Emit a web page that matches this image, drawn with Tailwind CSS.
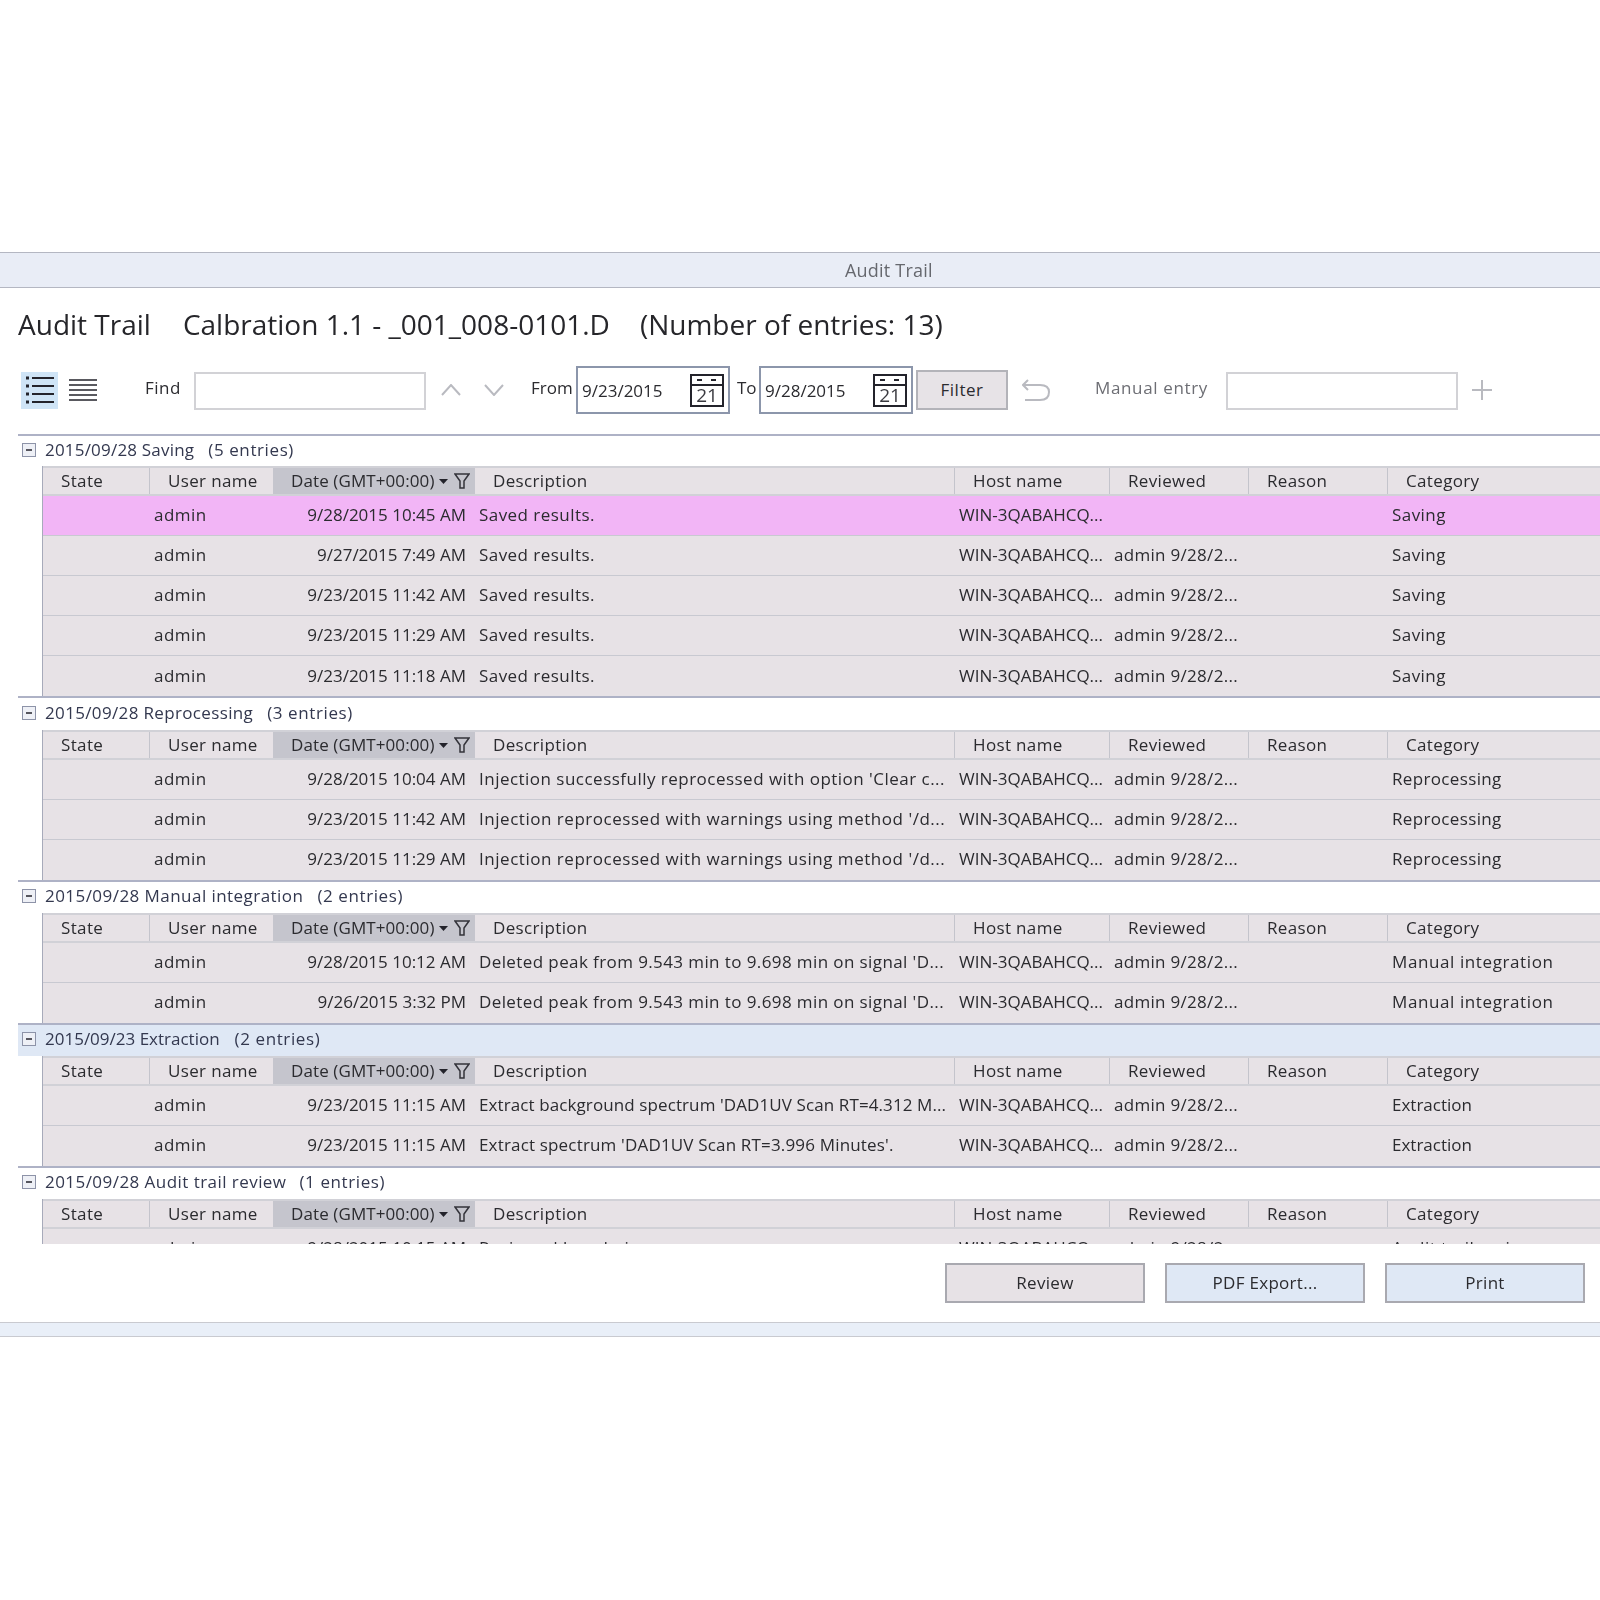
<!DOCTYPE html>
<html lang="en">
<head>
    <meta charset="UTF-8">
    <title>Audit Trail</title>
    <script src="https://cdn.jsdelivr.net/npm/@tailwindcss/browser@4"></script>
</head>
<body class="bg-white font-['Open_Sans',sans-serif] text-[#2b2b2f]">
<div class="w-[1600px] h-[1600px] overflow-hidden pt-[252px] blur-[0.4px]">

    <!-- window title -->
    <div class="h-9 bg-[#e9edf6] border-y border-y-[#b4b7c2] pl-[845px] flex items-center text-[18px] tracking-[0.2px] text-[#66686e]">Audit Trail</div>

    <!-- heading -->
    <div class="h-[78px] pl-[18px] pt-[15px] text-[28px] leading-[42px] text-[#26262a]">
        <span>Audit Trail</span><span class="ml-8">Calbration 1.1 - _001_008-0101.D</span><span class="ml-[30px]">(Number of entries: 13)</span>
    </div>

    <!-- toolbar -->
    <div class="h-12 flex items-center text-[17px]">
        <div class="ml-[21px] w-[37px] h-[37px] bg-[#cfe4f6] flex items-center justify-center">
            <svg width="28" height="30" viewBox="0 0 28 30" fill="none" stroke="#23232b" stroke-width="2"><path d="M6 3H28M6 11H28M6 19H28M6 27H28"/><path d="M0 3h3M0 11h3M0 19h3M0 27h3" stroke-width="3"/></svg>
        </div>
        <svg class="ml-[11px]" width="28" height="24" viewBox="0 0 28 24" fill="none" stroke="#23232b" stroke-width="1.6"><path d="M0 2H28M0 7H28M0 12H28M0 17H28M0 22H28"/></svg>
        <span class="ml-[48px] w-[49px] -mt-1 tracking-[0.5px]">Find</span>
        <div class="w-[232px] h-[38px] mt-px border-2 border-[#d2d2d6]"></div>
        <svg class="ml-[15px]" width="20" height="12" viewBox="0 0 20 12" fill="none" stroke="#b9bac0" stroke-width="2"><path d="M1 11L10 1L19 11"/></svg>
        <svg class="ml-[23px]" width="20" height="12" viewBox="0 0 20 12" fill="none" stroke="#b9bac0" stroke-width="2"><path d="M1 1L10 11L19 1"/></svg>
        <span class="ml-[27px] w-[45px] -mt-1">From</span>
        <div class="w-[154px] h-12 border-2 border-[#8c96ab] flex items-center justify-between pl-1 pr-1">
            <span class="pt-px">9/23/2015</span>
            <svg class="overflow-visible" width="34" height="33" viewBox="0 0 34 33" fill="none" stroke="#23232b" stroke-width="2"><rect x="1" y="1" width="32" height="31"/><path d="M1 11H33M7 6h5M21 6h5"/><text x="17" y="28" font-size="19" text-anchor="middle" fill="#3a3a40" stroke="none" font-family="Open Sans">21</text></svg>
        </div>
        <span class="ml-[7px] w-[22px] -mt-1">To</span>
        <div class="w-[154px] h-12 border-2 border-[#8c96ab] flex items-center justify-between pl-1 pr-1">
            <span class="pt-px">9/28/2015</span>
            <svg class="overflow-visible" width="34" height="33" viewBox="0 0 34 33" fill="none" stroke="#23232b" stroke-width="2"><rect x="1" y="1" width="32" height="31"/><path d="M1 11H33M7 6h5M21 6h5"/><text x="17" y="28" font-size="19" text-anchor="middle" fill="#3a3a40" stroke="none" font-family="Open Sans">21</text></svg>
        </div>
        <button class="ml-[3px] w-[92px] h-10 bg-[#e7e3e7] border-2 border-[#b3b3b9] tracking-[0.5px]">Filter</button>
        <svg class="ml-[14px]" width="28" height="22" viewBox="0 0 28 22" fill="none" stroke="#b9bac0" stroke-width="2"><path d="M6 1L1 6L6 11M1 6H18C25 6 27 9 27 13C27 18 24 21 18 21H3"/></svg>
        <span class="ml-[45px] w-[131px] -mt-1 text-[#6d6e74] tracking-[0.65px]">Manual entry</span>
        <div class="w-[232px] h-[38px] mt-px border-2 border-[#d2d2d6]"></div>
        <svg class="ml-[14px]" width="20" height="20" viewBox="0 0 20 20" fill="none" stroke="#b9bac0" stroke-width="2"><path d="M10 0V20M0 10H20"/></svg>
    </div>

    <div class="ml-[18px] mt-5 border-t-2 border-t-[#aeb2c6]"></div>

    <!-- grouped entries -->
    <div class="h-[808px] overflow-hidden ml-[18px] text-[17px]">

        <section class="border-b-2 border-b-[#aeb2c6]">
            <div class="h-[30px] pb-[3px] flex items-center gap-[9px] pl-1 text-[#33384f]">
                <svg width="14" height="14" viewBox="0 0 14 14" fill="none"><rect x="0.5" y="0.5" width="13" height="13" fill="#eef0f6" stroke="#8d93a8"/><path d="M4 7H10" stroke="#23232b" stroke-width="1.5"/></svg>
                <span class="tracking-[0.2px]">2015/09/28 Saving</span><span class="tracking-[0.6px] ml-[5px]">(5 entries)</span>
            </div>
            <div class="ml-6 border-l border-l-[#a7aaba]">
                <div class="h-[30px] grid grid-cols-[107px_123px_202px_480px_155px_139px_139px_213px] items-center bg-[#e7e2e6] border-y-2 border-[#d1d1d7] tracking-[0.35px]">
                    <span class="pl-[18px] h-full leading-[26px] border-r border-r-[#c4c4cc]">State</span><span class="pl-[18px] h-full leading-[26px]">User name</span>
                    <span class="pl-[18px] h-full leading-[26px] bg-[#c5c5cd] flex items-center tracking-[0.1px]">Date (GMT+00:00)<svg class="ml-1" width="9" height="5" viewBox="0 0 9 5" fill="#23232b"><path d="M0 0H9L4.500 5Z"/></svg><svg class="ml-[6px]" width="16" height="16" viewBox="0 0 16 16" fill="none" stroke="#33333a" stroke-width="1.500"><path d="M1 1H15L10 8V15H6V8Z"/></svg></span>
                    <span class="pl-[18px] h-full leading-[26px] border-r border-r-[#c4c4cc]">Description</span><span class="pl-[18px] h-full leading-[26px] border-r border-r-[#c4c4cc]">Host name</span><span class="pl-[18px] h-full leading-[26px] border-r border-r-[#c4c4cc]">Reviewed</span><span class="pl-[18px] h-full leading-[26px] border-r border-r-[#c4c4cc]">Reason</span><span class="pl-[18px] h-full leading-[26px]">Category</span>
                </div>
                <div class="h-10 pb-0.5 grid grid-cols-[107px_123px_202px_480px_155px_139px_139px_213px] items-center bg-[#f2b5f6] border-b border-b-[#c8c9d1] tracking-[0.45px]"><span></span><span class="pl-1">admin</span><span class="pr-[9px] text-right tracking-normal">9/28/2015 10:45 AM</span><span class="pl-1">Saved results.</span><span class="pl-1 tracking-normal">WIN-3QABAHCQ...</span><span></span><span></span><span class="pl-1">Saving</span></div>
                <div class="h-10 pb-0.5 grid grid-cols-[107px_123px_202px_480px_155px_139px_139px_213px] items-center bg-[#e7e2e6] border-b border-b-[#c8c9d1] tracking-[0.45px]"><span></span><span class="pl-1">admin</span><span class="pr-[9px] text-right tracking-normal">9/27/2015 7:49 AM</span><span class="pl-1">Saved results.</span><span class="pl-1 tracking-normal">WIN-3QABAHCQ...</span><span class="pl-1 tracking-[0.3px]">admin 9/28/2...</span><span></span><span class="pl-1">Saving</span></div>
                <div class="h-10 pb-0.5 grid grid-cols-[107px_123px_202px_480px_155px_139px_139px_213px] items-center bg-[#e7e2e6] border-b border-b-[#c8c9d1] tracking-[0.45px]"><span></span><span class="pl-1">admin</span><span class="pr-[9px] text-right tracking-normal">9/23/2015 11:42 AM</span><span class="pl-1">Saved results.</span><span class="pl-1 tracking-normal">WIN-3QABAHCQ...</span><span class="pl-1 tracking-[0.3px]">admin 9/28/2...</span><span></span><span class="pl-1">Saving</span></div>
                <div class="h-10 pb-0.5 grid grid-cols-[107px_123px_202px_480px_155px_139px_139px_213px] items-center bg-[#e7e2e6] border-b border-b-[#c8c9d1] tracking-[0.45px]"><span></span><span class="pl-1">admin</span><span class="pr-[9px] text-right tracking-normal">9/23/2015 11:29 AM</span><span class="pl-1">Saved results.</span><span class="pl-1 tracking-normal">WIN-3QABAHCQ...</span><span class="pl-1 tracking-[0.3px]">admin 9/28/2...</span><span></span><span class="pl-1">Saving</span></div>
                <div class="h-10 grid grid-cols-[107px_123px_202px_480px_155px_139px_139px_213px] items-center bg-[#e7e2e6] tracking-[0.45px]"><span></span><span class="pl-1">admin</span><span class="pr-[9px] text-right tracking-normal">9/23/2015 11:18 AM</span><span class="pl-1">Saved results.</span><span class="pl-1 tracking-normal">WIN-3QABAHCQ...</span><span class="pl-1 tracking-[0.3px]">admin 9/28/2...</span><span></span><span class="pl-1">Saving</span></div>
            </div>
        </section>

        <section class="border-b-2 border-b-[#aeb2c6]">
            <div class="h-[32px] pb-[3px] flex items-center gap-[9px] pl-1 text-[#33384f]">
                <svg width="14" height="14" viewBox="0 0 14 14" fill="none"><rect x="0.5" y="0.5" width="13" height="13" fill="#eef0f6" stroke="#8d93a8"/><path d="M4 7H10" stroke="#23232b" stroke-width="1.5"/></svg>
                <span class="tracking-[0.35px]">2015/09/28 Reprocessing</span><span class="tracking-[0.6px] ml-[5px]">(3 entries)</span>
            </div>
            <div class="ml-6 border-l border-l-[#a7aaba]">
                <div class="h-[30px] grid grid-cols-[107px_123px_202px_480px_155px_139px_139px_213px] items-center bg-[#e7e2e6] border-y-2 border-[#d1d1d7] tracking-[0.35px]">
                    <span class="pl-[18px] h-full leading-[26px] border-r border-r-[#c4c4cc]">State</span><span class="pl-[18px] h-full leading-[26px]">User name</span>
                    <span class="pl-[18px] h-full leading-[26px] bg-[#c5c5cd] flex items-center tracking-[0.1px]">Date (GMT+00:00)<svg class="ml-1" width="9" height="5" viewBox="0 0 9 5" fill="#23232b"><path d="M0 0H9L4.500 5Z"/></svg><svg class="ml-[6px]" width="16" height="16" viewBox="0 0 16 16" fill="none" stroke="#33333a" stroke-width="1.500"><path d="M1 1H15L10 8V15H6V8Z"/></svg></span>
                    <span class="pl-[18px] h-full leading-[26px] border-r border-r-[#c4c4cc]">Description</span><span class="pl-[18px] h-full leading-[26px] border-r border-r-[#c4c4cc]">Host name</span><span class="pl-[18px] h-full leading-[26px] border-r border-r-[#c4c4cc]">Reviewed</span><span class="pl-[18px] h-full leading-[26px] border-r border-r-[#c4c4cc]">Reason</span><span class="pl-[18px] h-full leading-[26px]">Category</span>
                </div>
                <div class="h-10 pb-0.5 grid grid-cols-[107px_123px_202px_480px_155px_139px_139px_213px] items-center bg-[#e7e2e6] border-b border-b-[#c8c9d1] tracking-[0.45px]"><span></span><span class="pl-1">admin</span><span class="pr-[9px] text-right tracking-normal">9/28/2015 10:04 AM</span><span class="pl-1 tracking-[0.48px]">Injection successfully reprocessed with option 'Clear c...</span><span class="pl-1 tracking-normal">WIN-3QABAHCQ...</span><span class="pl-1 tracking-[0.3px]">admin 9/28/2...</span><span></span><span class="pl-1 tracking-[0.35px]">Reprocessing</span></div>
                <div class="h-10 pb-0.5 grid grid-cols-[107px_123px_202px_480px_155px_139px_139px_213px] items-center bg-[#e7e2e6] border-b border-b-[#c8c9d1] tracking-[0.45px]"><span></span><span class="pl-1">admin</span><span class="pr-[9px] text-right tracking-normal">9/23/2015 11:42 AM</span><span class="pl-1 tracking-[0.53px]">Injection reprocessed with warnings using method '/d...</span><span class="pl-1 tracking-normal">WIN-3QABAHCQ...</span><span class="pl-1 tracking-[0.3px]">admin 9/28/2...</span><span></span><span class="pl-1 tracking-[0.35px]">Reprocessing</span></div>
                <div class="h-10 pb-0.5 grid grid-cols-[107px_123px_202px_480px_155px_139px_139px_213px] items-center bg-[#e7e2e6] tracking-[0.45px]"><span></span><span class="pl-1">admin</span><span class="pr-[9px] text-right tracking-normal">9/23/2015 11:29 AM</span><span class="pl-1 tracking-[0.53px]">Injection reprocessed with warnings using method '/d...</span><span class="pl-1 tracking-normal">WIN-3QABAHCQ...</span><span class="pl-1 tracking-[0.3px]">admin 9/28/2...</span><span></span><span class="pl-1 tracking-[0.35px]">Reprocessing</span></div>
            </div>
        </section>

        <section class="border-b-2 border-b-[#aeb2c6]">
            <div class="h-[31px] pb-[3px] flex items-center gap-[9px] pl-1 text-[#33384f]">
                <svg width="14" height="14" viewBox="0 0 14 14" fill="none"><rect x="0.5" y="0.5" width="13" height="13" fill="#eef0f6" stroke="#8d93a8"/><path d="M4 7H10" stroke="#23232b" stroke-width="1.5"/></svg>
                <span class="tracking-[0.45px]">2015/09/28 Manual integration</span><span class="tracking-[0.6px] ml-[5px]">(2 entries)</span>
            </div>
            <div class="ml-6 border-l border-l-[#a7aaba]">
                <div class="h-[30px] grid grid-cols-[107px_123px_202px_480px_155px_139px_139px_213px] items-center bg-[#e7e2e6] border-y-2 border-[#d1d1d7] tracking-[0.35px]">
                    <span class="pl-[18px] h-full leading-[26px] border-r border-r-[#c4c4cc]">State</span><span class="pl-[18px] h-full leading-[26px]">User name</span>
                    <span class="pl-[18px] h-full leading-[26px] bg-[#c5c5cd] flex items-center tracking-[0.1px]">Date (GMT+00:00)<svg class="ml-1" width="9" height="5" viewBox="0 0 9 5" fill="#23232b"><path d="M0 0H9L4.500 5Z"/></svg><svg class="ml-[6px]" width="16" height="16" viewBox="0 0 16 16" fill="none" stroke="#33333a" stroke-width="1.500"><path d="M1 1H15L10 8V15H6V8Z"/></svg></span>
                    <span class="pl-[18px] h-full leading-[26px] border-r border-r-[#c4c4cc]">Description</span><span class="pl-[18px] h-full leading-[26px] border-r border-r-[#c4c4cc]">Host name</span><span class="pl-[18px] h-full leading-[26px] border-r border-r-[#c4c4cc]">Reviewed</span><span class="pl-[18px] h-full leading-[26px] border-r border-r-[#c4c4cc]">Reason</span><span class="pl-[18px] h-full leading-[26px]">Category</span>
                </div>
                <div class="h-10 pb-0.5 grid grid-cols-[107px_123px_202px_480px_155px_139px_139px_213px] items-center bg-[#e7e2e6] border-b border-b-[#c8c9d1] tracking-[0.45px]"><span></span><span class="pl-1">admin</span><span class="pr-[9px] text-right tracking-normal">9/28/2015 10:12 AM</span><span class="pl-1 tracking-[0.4px]">Deleted peak from 9.543 min to 9.698 min on signal 'D...</span><span class="pl-1 tracking-normal">WIN-3QABAHCQ...</span><span class="pl-1 tracking-[0.3px]">admin 9/28/2...</span><span></span><span class="pl-1 tracking-[0.6px]">Manual integration</span></div>
                <div class="h-10 pb-0.5 grid grid-cols-[107px_123px_202px_480px_155px_139px_139px_213px] items-center bg-[#e7e2e6] tracking-[0.45px]"><span></span><span class="pl-1">admin</span><span class="pr-[9px] text-right tracking-normal">9/26/2015 3:32 PM</span><span class="pl-1 tracking-[0.4px]">Deleted peak from 9.543 min to 9.698 min on signal 'D...</span><span class="pl-1 tracking-normal">WIN-3QABAHCQ...</span><span class="pl-1 tracking-[0.3px]">admin 9/28/2...</span><span></span><span class="pl-1 tracking-[0.6px]">Manual integration</span></div>
            </div>
        </section>

        <section class="border-b-2 border-b-[#aeb2c6]">
            <div class="h-[31px] pb-[3px] flex items-center gap-[9px] pl-1 bg-[#dfe8f5] text-[#33384f]">
                <svg width="14" height="14" viewBox="0 0 14 14" fill="none"><rect x="0.5" y="0.5" width="13" height="13" fill="#eef0f6" stroke="#8d93a8"/><path d="M4 7H10" stroke="#23232b" stroke-width="1.5"/></svg>
                <span>2015/09/23 Extraction</span><span class="tracking-[0.6px] ml-1.5">(2 entries)</span>
            </div>
            <div class="ml-6 border-l border-l-[#a7aaba]">
                <div class="h-[30px] grid grid-cols-[107px_123px_202px_480px_155px_139px_139px_213px] items-center bg-[#e7e2e6] border-y-2 border-[#d1d1d7] tracking-[0.35px]">
                    <span class="pl-[18px] h-full leading-[26px] border-r border-r-[#c4c4cc]">State</span><span class="pl-[18px] h-full leading-[26px]">User name</span>
                    <span class="pl-[18px] h-full leading-[26px] bg-[#c5c5cd] flex items-center tracking-[0.1px]">Date (GMT+00:00)<svg class="ml-1" width="9" height="5" viewBox="0 0 9 5" fill="#23232b"><path d="M0 0H9L4.500 5Z"/></svg><svg class="ml-[6px]" width="16" height="16" viewBox="0 0 16 16" fill="none" stroke="#33333a" stroke-width="1.500"><path d="M1 1H15L10 8V15H6V8Z"/></svg></span>
                    <span class="pl-[18px] h-full leading-[26px] border-r border-r-[#c4c4cc]">Description</span><span class="pl-[18px] h-full leading-[26px] border-r border-r-[#c4c4cc]">Host name</span><span class="pl-[18px] h-full leading-[26px] border-r border-r-[#c4c4cc]">Reviewed</span><span class="pl-[18px] h-full leading-[26px] border-r border-r-[#c4c4cc]">Reason</span><span class="pl-[18px] h-full leading-[26px]">Category</span>
                </div>
                <div class="h-10 pb-0.5 grid grid-cols-[107px_123px_202px_480px_155px_139px_139px_213px] items-center bg-[#e7e2e6] border-b border-b-[#c8c9d1] tracking-[0.45px]"><span></span><span class="pl-1">admin</span><span class="pr-[9px] text-right tracking-normal">9/23/2015 11:15 AM</span><span class="pl-1 tracking-[0.1px]">Extract background spectrum 'DAD1UV Scan RT=4.312 M...</span><span class="pl-1 tracking-normal">WIN-3QABAHCQ...</span><span class="pl-1 tracking-[0.3px]">admin 9/28/2...</span><span></span><span class="pl-1 tracking-normal">Extraction</span></div>
                <div class="h-10 pb-0.5 grid grid-cols-[107px_123px_202px_480px_155px_139px_139px_213px] items-center bg-[#e7e2e6] tracking-[0.45px]"><span></span><span class="pl-1">admin</span><span class="pr-[9px] text-right tracking-normal">9/23/2015 11:15 AM</span><span class="pl-1 tracking-[0.17px]">Extract spectrum 'DAD1UV Scan RT=3.996 Minutes'.</span><span class="pl-1 tracking-normal">WIN-3QABAHCQ...</span><span class="pl-1 tracking-[0.3px]">admin 9/28/2...</span><span></span><span class="pl-1 tracking-normal">Extraction</span></div>
            </div>
        </section>

        <section>
            <div class="h-[31px] pb-[3px] flex items-center gap-[9px] pl-1 text-[#33384f]">
                <svg width="14" height="14" viewBox="0 0 14 14" fill="none"><rect x="0.5" y="0.5" width="13" height="13" fill="#eef0f6" stroke="#8d93a8"/><path d="M4 7H10" stroke="#23232b" stroke-width="1.5"/></svg>
                <span class="tracking-[0.45px]">2015/09/28 Audit trail review</span><span class="tracking-[0.6px] ml-1">(1 entries)</span>
            </div>
            <div class="ml-6 border-l border-l-[#a7aaba]">
                <div class="h-[30px] grid grid-cols-[107px_123px_202px_480px_155px_139px_139px_213px] items-center bg-[#e7e2e6] border-y-2 border-[#d1d1d7] tracking-[0.35px]">
                    <span class="pl-[18px] h-full leading-[26px] border-r border-r-[#c4c4cc]">State</span><span class="pl-[18px] h-full leading-[26px]">User name</span>
                    <span class="pl-[18px] h-full leading-[26px] bg-[#c5c5cd] flex items-center tracking-[0.1px]">Date (GMT+00:00)<svg class="ml-1" width="9" height="5" viewBox="0 0 9 5" fill="#23232b"><path d="M0 0H9L4.500 5Z"/></svg><svg class="ml-[6px]" width="16" height="16" viewBox="0 0 16 16" fill="none" stroke="#33333a" stroke-width="1.500"><path d="M1 1H15L10 8V15H6V8Z"/></svg></span>
                    <span class="pl-[18px] h-full leading-[26px] border-r border-r-[#c4c4cc]">Description</span><span class="pl-[18px] h-full leading-[26px] border-r border-r-[#c4c4cc]">Host name</span><span class="pl-[18px] h-full leading-[26px] border-r border-r-[#c4c4cc]">Reviewed</span><span class="pl-[18px] h-full leading-[26px] border-r border-r-[#c4c4cc]">Reason</span><span class="pl-[18px] h-full leading-[26px]">Category</span>
                </div>
                <div class="h-10 pb-0.5 grid grid-cols-[107px_123px_202px_480px_155px_139px_139px_213px] items-center bg-[#e7e2e6] tracking-[0.45px]"><span></span><span class="pl-1">admin</span><span class="pr-[9px] text-right tracking-normal">9/28/2015 10:15 AM</span><span class="pl-1">Reviewed by admin</span><span class="pl-1 tracking-normal">WIN-3QABAHCQ...</span><span class="pl-1 tracking-[0.3px]">admin 9/28/2...</span><span></span><span class="pl-1">Audit trail review</span></div>
            </div>
        </section>
    </div>

    <!-- footer buttons -->
    <div class="flex justify-end gap-5 pr-[15px] pt-[19px] text-[17px] tracking-[0.3px]">
        <button class="w-[200px] h-10 bg-[#e7e2e6] border-2 border-[#a9a9b0]">Review</button>
        <button class="w-[200px] h-10 bg-[#dfe8f5] border-2 border-[#a9a9b0]">PDF Export...</button>
        <button class="w-[200px] h-10 bg-[#dfe8f5] border-2 border-[#a9a9b0]">Print</button>
    </div>

    <div class="mt-[19px] h-[15px] bg-[#e9eff8] border-y border-y-[#c9cad0]"></div>
</div>
</body>
</html>
